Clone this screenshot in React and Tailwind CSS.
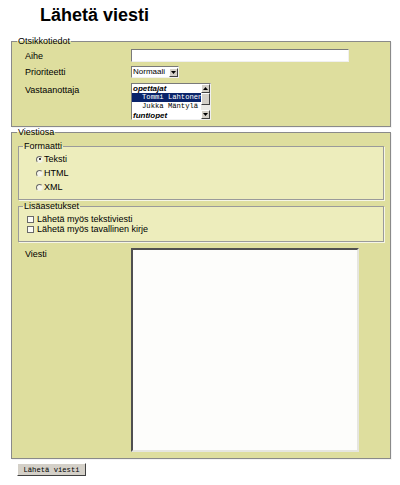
import React from "react";

const sans = "font-['Liberation_Sans',Arial,sans-serif]";
const mono = "font-['Liberation_Mono','Courier_New',monospace]";

function Radio({ checked, label }) {
  return (
    <div className="flex h-[14px] items-center pl-[17px]">
      <span className="relative mr-[1px] box-border h-[7px] w-[7px] rounded-full border border-b-[#f0f0e0] border-l-[#6a6a6a] border-r-[#f0f0e0] border-t-[#6a6a6a] bg-[#f7f7ec]">
        {checked && (
          <span className="absolute left-[1.5px] top-[1.5px] h-[2px] w-[2px] rounded-full bg-black" />
        )}
      </span>
      <span className="text-[9px] leading-[10px]">{label}</span>
    </div>
  );
}

function Check({ label }) {
  return (
    <div className="flex h-[10px] items-center pl-[8px]">
      <span className="mr-[3px] box-border h-[7px] w-[7px] border border-[#6a6a6a] bg-[#fbfbf4]" />
      <span className="text-[9px] leading-[10px]">{label}</span>
    </div>
  );
}

function ArrowBtn({ dir }) {
  return (
    <div className="box-border flex h-[9px] w-[9px] items-center justify-center border border-b-[#404040] border-l-[#ffffff] border-r-[#404040] border-t-[#ffffff] bg-[#d4d0c8]">
      <svg width="5" height="3" viewBox="0 0 5 3">
        {dir === "up" ? (
          <polygon points="2.5,0 5,3 0,3" fill="#000" />
        ) : (
          <polygon points="0,0 5,0 2.5,3" fill="#000" />
        )}
      </svg>
    </div>
  );
}

export default function App() {
  return (
    <div className={`${sans} min-h-[485px] w-[400px] bg-white text-black`}>
      <h1 className="pl-[40px] pt-[5px] text-[18px] font-bold leading-[21px]">
        Lähetä viesti
      </h1>

      {/* header fields */}
      <fieldset className="ml-[11px] mt-[10px] box-border w-[380px] border border-[#8a8a8a] bg-[#dede9e] pb-[6px] shadow-[1px_1px_0_#f4f4f4]">
        <legend className="ml-[5px] px-px text-[9px] leading-[10px]">Otsikkotiedot</legend>

        <div className="mt-[3px] flex h-[13px] items-center pl-[13px]">
          <span className="w-[106px] text-[9px] leading-[10px]">Aihe</span>
          <div className="box-border h-[13px] w-[218px] border border-b-[#f0f0f0] border-l-[#7a7a7a] border-r-[#f0f0f0] border-t-[#7a7a7a] bg-white" />
        </div>

        <div className="mt-[4px] flex h-[12px] items-center pl-[13px]">
          <span className="w-[106px] text-[9px] leading-[10px]">Prioriteetti</span>
          <div className="box-border flex h-[12px] w-[48px] items-center border border-b-[#f0f0f0] border-l-[#7a7a7a] border-r-[#f0f0f0] border-t-[#7a7a7a] bg-white">
            <span className="flex-1 pl-[1px] text-[8px] leading-[10px]">Normaali</span>
            <ArrowBtn dir="down" />
          </div>
        </div>

        <div className="mt-[5px] flex items-start pl-[13px]">
          <span className="mt-[2px] w-[106px] text-[9px] leading-[10px]">Vastaanottaja</span>
          <div className="box-border flex h-[37px] w-[80px] border border-b-[#f0f0f0] border-l-[#7a7a7a] border-r-[#f0f0f0] border-t-[#7a7a7a] bg-white">
            <div className="flex-1 overflow-hidden">
              <div className="h-[9px] pl-[1px] text-[8px] font-bold italic leading-[9px]">opettajat</div>
              <div className={`${mono} h-[9px] whitespace-nowrap bg-[#0a246a] pl-[10px] text-[7.2px] leading-[9px] text-white`}>
                Tommi Lahtonen
              </div>
              <div className={`${mono} h-[9px] whitespace-nowrap pl-[10px] text-[7.2px] leading-[9px]`}>
                Jukka Mäntylä
              </div>
              <div className="h-[9px] pl-[1px] text-[8px] font-bold italic leading-[9px]">funtiopet</div>
            </div>
            <div className="flex w-[9px] flex-col bg-[#ecebe6]">
              <ArrowBtn dir="up" />
              <div className="box-border h-[12px] w-[9px] border border-b-[#404040] border-l-[#ffffff] border-r-[#404040] border-t-[#ffffff] bg-[#d4d0c8]" />
              <div className="flex-1" />
              <ArrowBtn dir="down" />
            </div>
          </div>
        </div>
      </fieldset>

      {/* message part */}
      <fieldset className="ml-[11px] box-border w-[380px] border border-[#8a8a8a] bg-[#dede9e] pb-[6px] shadow-[1px_1px_0_#f4f4f4]">
        <legend className="ml-[5px] px-px text-[9px] leading-[10px]">Viestiosa</legend>

        <fieldset className="mx-[6px] mt-[4px] box-border border border-[#9a9a9a] bg-[#ededbc] pb-[5px] pt-[1px] shadow-[1px_1px_0_#f6f6e6]">
          <legend className="ml-[4px] px-px text-[9px] leading-[10px]">Formaatti</legend>
          <Radio checked label="Teksti" />
          <Radio label="HTML" />
          <Radio label="XML" />
        </fieldset>

        <fieldset className="mx-[6px] mt-[1px] box-border border border-[#9a9a9a] bg-[#ededbc] pb-[7px] pt-[3px] shadow-[1px_1px_0_#f6f6e6]">
          <legend className="ml-[4px] px-px text-[9px] leading-[10px]">Lisäasetukset</legend>
          <Check label="Lähetä myös tekstiviesti" />
          <Check label="Lähetä myös tavallinen kirje" />
        </fieldset>

        <div className="mt-[6px] flex items-start pl-[13px]">
          <span className="mt-[1px] w-[106px] text-[9px] leading-[10px]">Viesti</span>
          <div className="box-border h-[204px] w-[228px] border-2 border-b-[#e6e6e0] border-l-[#505050] border-r-[#e6e6e0] border-t-[#505050] bg-[#fdfdfb]" />
        </div>
      </fieldset>

      <button
        type="button"
        className={`${mono} ml-[17px] mt-[4px] box-border block h-[13px] w-[69px] border border-b-[#404040] border-l-[#ffffff] border-r-[#404040] border-t-[#ffffff] bg-[#d4d0c8] p-0 text-[7.2px] leading-[10px] text-black`}
      >
        Lähetä viesti
      </button>
    </div>
  );
}
